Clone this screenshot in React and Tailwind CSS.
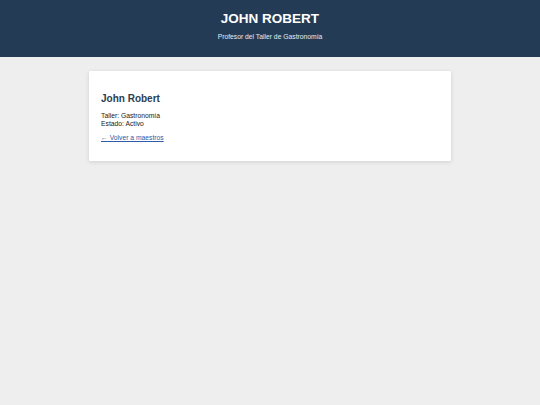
import React from 'react';

const App = () => {
    return (
        <div className="min-h-[405px] w-full bg-[#eeeeee] font-['Liberation_Sans',Arial,sans-serif]">
            <header className="h-[57px] bg-[#243b55] text-white text-center pt-[11px]">
                <h1 className="text-[13.5px] leading-[15.5px] font-bold">JOHN ROBERT</h1>
                <p className="mt-[6.5px] text-[6.75px] leading-[7.7px] text-[#e6ebf2]">Profesor del Taller de Gastronomía</p>
            </header>

            <main className="pt-[14px] flex justify-center">
                <div className="w-[362px] h-[90px] bg-white rounded-[1px] shadow-[0_1px_4px_rgba(0,0,0,0.13)] px-[12px] pt-[22px]">
                    <h2 className="text-[10px] leading-[11.5px] font-bold text-[#2c3e50]">John Robert</h2>
                    <div className="mt-[7.5px] text-[6.75px] leading-[7.7px] text-[#222222]">
                        <p>Taller: Gastronomía</p>
                        <p>Estado: Activo</p>
                    </div>
                    <a href="#" className="block mt-[6.6px] w-fit text-[6.75px] leading-[7.7px] text-[#2f5ba8] underline">
                        ← Volver a maestros
                    </a>
                </div>
            </main>
        </div>
    );
};

export default App;
